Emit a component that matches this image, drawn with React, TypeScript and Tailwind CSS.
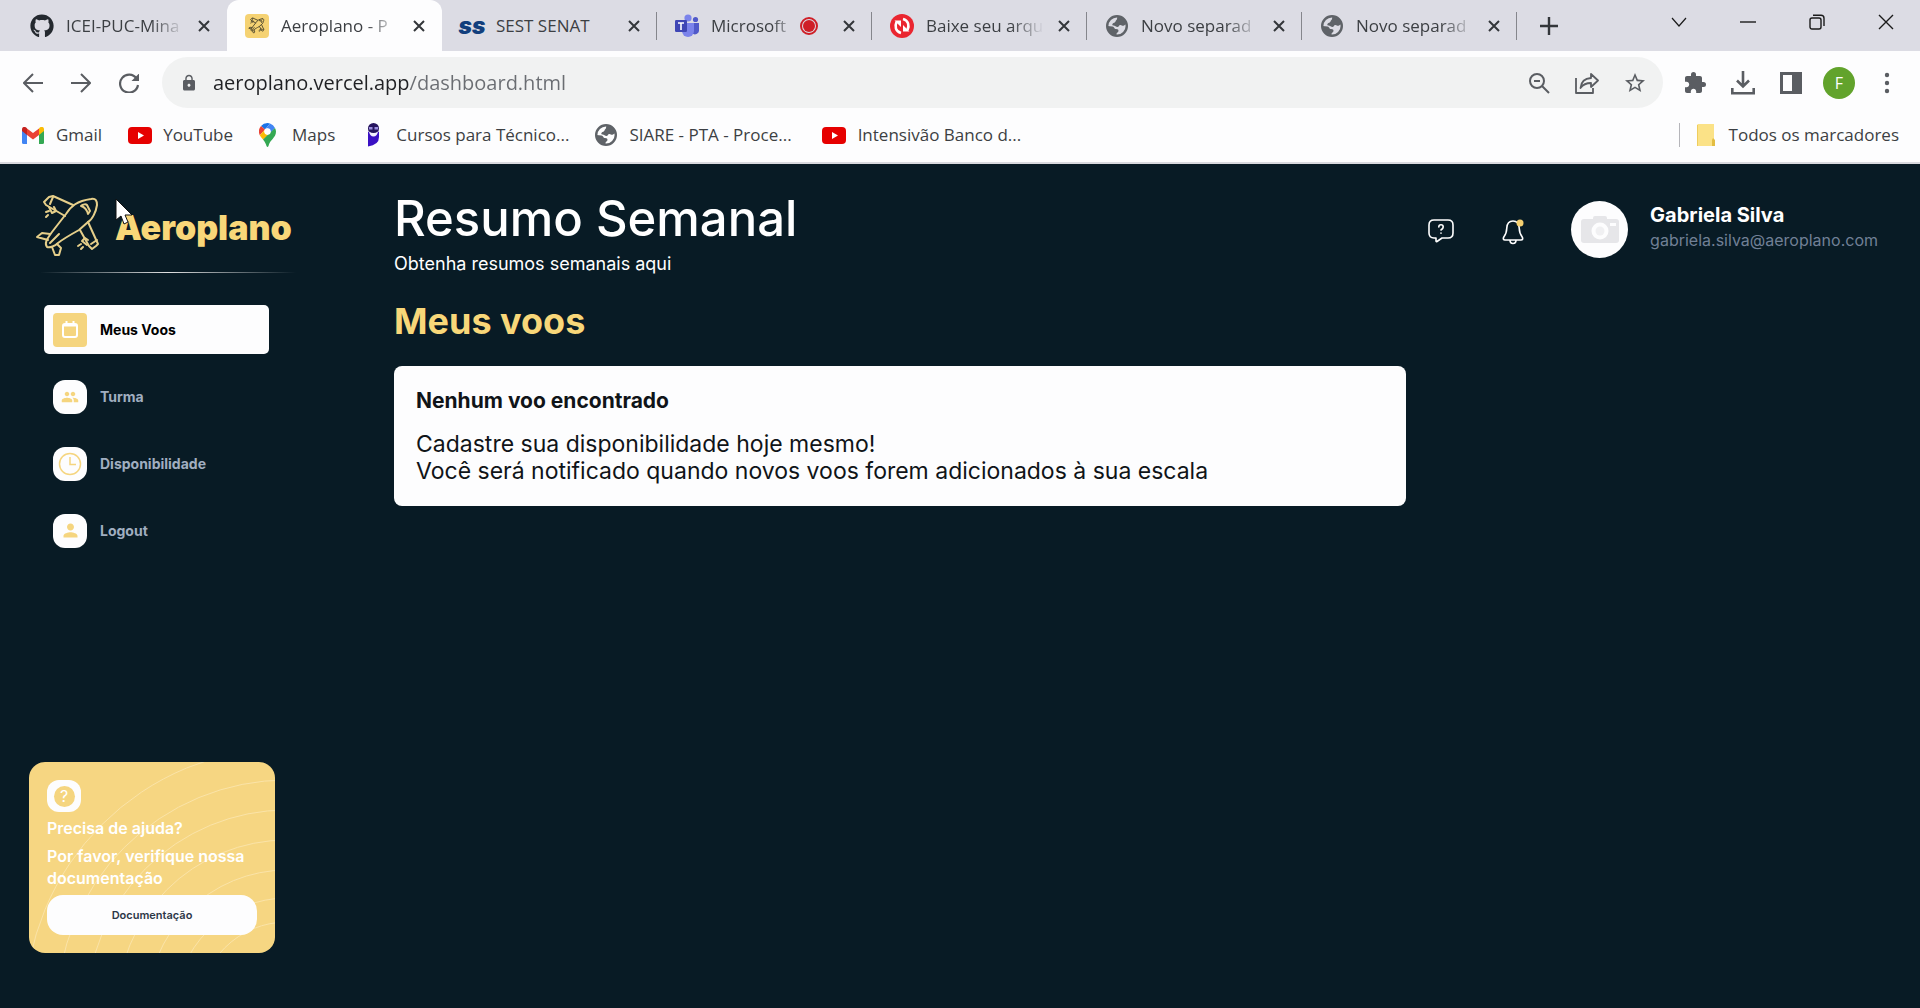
import type { ReactNode } from "react";
import { FaGithub } from "react-icons/fa";
import { MdExtension, MdGroup, MdLock, MdPerson, MdStarOutline } from "react-icons/md";

const GithubIcon = () => <FaGithub className="size-6 text-[#24292f]" />;

function GlobeIcon() {
  return (
    <svg viewBox="0 0 22 22" className="w-[22px] text-[#5f6368]" aria-hidden="true">
      <circle cx="11" cy="11" r="9.800" fill="none" stroke="currentColor" strokeWidth="2.400" />
      <path d="M11.500 1C16 1 20 4 21 8.500l-3 2c-1.500 1-2.500-1-4-.5-1.500.4-1 2-2.500 2S9 10.500 7.500 10.500 6 9.500 6.800 8.500 9 8 9.500 6.500 11 5 11 4z" fill="currentColor" />
      <path d="M1.500 11l5 .5c2 .3 1.500 2.500 3.500 2.500s2.500.8 2.500 2-2 1.500-2 3V21C5 20.500 1.500 16 1.500 11z" fill="currentColor" />
    </svg>
  );
}

function PlaneDrawing({ className, stroke, width }: { className: string; stroke: string; width: number }) {
  return (
    <svg viewBox="0 0 80 76" className={className} fill="none" stroke={stroke} strokeWidth={width} strokeLinejoin="round" strokeLinecap="round" aria-hidden="true">
      <path d="M61 9C66 8 67 11 67 15C66 22 62 30 58 32L49 40C40 45 33 49 28 53C25 56 20 58 17 57C14 53 17 49 22 42L36 24C41 16 47 11 61 9Z" />
      <path d="M43 15L23 6L19 7L14 12L16 15L35 26" />
      <path d="M23 7L20 14M19 17L22 23L26 21L24 17" />
      <path d="M58 32L68 54L66 56L62 59L59 56L50 40" />
      <path d="M61 54L67 50M57 55L52 51L55 48L58 50" />
      <path d="M20 44L12 43L7 47L18 50M27 54L31 58L29 65L25 65L22 57" />
      <path d="M29 44L20 53M51 16C53 14 56 14 57 15L60 21L58 24C57 20 55 17 51 16Z" />
      <path d="M19 21L16 22M18 25L16 27M51 54L48 56M53 57L51 59" />
    </svg>
  );
}

function AeroplanoIcon() {
  return (
    <span className="flex size-6 items-center justify-center rounded bg-[#f5d273]">
      <PlaneDrawing className="size-5" stroke="#5c5334" width={4} />
    </span>
  );
}

function SestIcon() {
  return <span className="font-['Inter',sans-serif] text-[23px] leading-6 font-black text-[#123f7d] italic">ss</span>;
}

function TeamsIcon() {
  return (
    <svg viewBox="0 0 24 24" className="size-6" aria-hidden="true">
      <circle cx="20.5" cy="5.5" r="2.6" fill="#5059c9" />
      <path d="M16 9h8v7a4 4 0 0 1-7 3z" fill="#5059c9" />
      <circle cx="13" cy="4" r="3.6" fill="#7b83eb" />
      <path d="M7 9h12v8a6 6 0 0 1-12 0z" fill="#7b83eb" />
      <rect x="0" y="6" width="12" height="12" rx="1.2" fill="#3f46b5" />
      <path d="M3 9h6M6 9v7" stroke="#fff" strokeWidth="1.6" />
    </svg>
  );
}

function ConvertIcon() {
  return (
    <svg viewBox="0 0 24 24" className="size-6" aria-hidden="true">
      <circle cx="12" cy="12" r="12" fill="#ea2630" />
      <g fill="none" stroke="#fff" strokeWidth="2.6">
        <path d="M11 19C5.500 17.500 4.500 12.500 6.500 8" />
        <path d="M13 5C18.500 6.500 19.500 11.500 17.500 16" />
      </g>
      <path d="M4.500 6.500l6.500 0v6.500zM19.500 17.500L13 17.500v-6.500z" fill="#fff" />
    </svg>
  );
}

function CloseGlyph() {
  return (
    <svg viewBox="0 0 12 12" className="size-3" stroke="#33363a" strokeWidth="2" aria-hidden="true">
      <path d="M1 1l10 10M11 1L1 11" />
    </svg>
  );
}

function Tab({ title, icon, active, recording, divider }: { title: string; icon: ReactNode; active?: boolean; recording?: boolean; divider?: boolean }) {
  return (
    <div
      className={
        active
          ? "relative flex h-[51px] w-[215px] items-center rounded-t-xl bg-[#fdfdfe] pr-[15px] pl-[18px]"
          : "relative flex h-[51px] w-[215px] items-center pr-[15px] pl-[18px]"
      }
    >
      <span className="flex w-6 shrink-0 justify-center">{icon}</span>
      <button
        className={
          title === "SEST SENAT"
            ? "ml-3 h-8 min-w-0 flex-1 text-left text-[17px] whitespace-nowrap"
            : "ml-3 h-8 min-w-0 flex-1 text-left text-[17px] whitespace-nowrap [mask-image:linear-gradient(to_right,black_72%,transparent)]"
        }
      >
        {title}
      </button>
      {recording && (
        <span className="mr-[11px] ml-1 flex size-[18px] shrink-0 items-center justify-center rounded-full border-2 border-[#cf1f27]">
          <span className="size-3 rounded-full bg-[#cf1f27]" />
        </span>
      )}
      <button aria-label={`Fechar ${title}`} className="ml-3 flex size-4 shrink-0 items-center justify-center">
        <CloseGlyph />
      </button>
      {divider && <span className="absolute top-3 right-0 h-7 w-px bg-[#85868c]" />}
    </div>
  );
}

function TabStrip() {
  return (
    <header className="flex h-[51px] bg-[#dcdce4] pl-3 text-[#3c3f43]">
      <nav aria-label="Separadores" className="flex min-w-0">
        <Tab title="ICEI-PUC-Mina" icon={<GithubIcon />} />
        <Tab title="Aeroplano - P" icon={<AeroplanoIcon />} active />
        <Tab title="SEST SENAT" icon={<SestIcon />} divider />
        <Tab title="Microsoft" icon={<TeamsIcon />} recording divider />
        <Tab title="Baixe seu arqu" icon={<ConvertIcon />} divider />
        <Tab title="Novo separad" icon={<GlobeIcon />} divider />
        <Tab title="Novo separad" icon={<GlobeIcon />} divider />
      </nav>
      <button aria-label="Novo separador" className="ml-[22px] flex w-5 shrink-0 items-center justify-center">
        <svg viewBox="0 0 18 18" className="size-[18px]" stroke="#33363a" strokeWidth="2.4" aria-hidden="true">
          <path d="M9 0v18M0 9h18" />
        </svg>
      </button>
      <div className="ml-auto flex h-11 items-center">
        <button aria-label="Pesquisar separadores" className="flex w-[69px] justify-center">
          <svg viewBox="0 0 16 10" className="w-4" fill="none" stroke="#1b1b1b" strokeWidth="1.2"><path d="M1 1l7 8 7-8" /></svg>
        </button>
        <button aria-label="Minimizar" className="flex w-[69px] justify-center">
          <svg viewBox="0 0 16 16" className="size-4" stroke="#1b1b1b" strokeWidth="1.4"><path d="M0 8h16" /></svg>
        </button>
        <button aria-label="Restaurar" className="flex w-[69px] justify-center">
          <svg viewBox="0 0 16 16" className="size-4" fill="none" stroke="#1b1b1b" strokeWidth="1.4">
            <rect x="1" y="4" width="11" height="11" rx="2" /><path d="M4 1.2h8a3 3 0 0 1 3 3V12" />
          </svg>
        </button>
        <button aria-label="Fechar janela" className="flex w-[69px] justify-center">
          <svg viewBox="0 0 16 16" className="size-4" stroke="#1b1b1b" strokeWidth="1.4"><path d="M1 1l14 14M15 1L1 15" /></svg>
        </button>
      </div>
    </header>
  );
}

function Toolbar() {
  return (
    <div className="flex h-[63px] items-center bg-[#fdfdfe] pr-[21px] pl-[23px] text-[#5a5d62]">
      <div className="flex w-[139px] shrink-0 gap-7">
        <button aria-label="Voltar">
          <svg viewBox="0 0 20 20" className="size-5" fill="none" stroke="currentColor" strokeWidth="2"><path d="M20 10H2M10 1L1 10l9 9" /></svg>
        </button>
        <button aria-label="Avançar">
          <svg viewBox="0 0 20 20" className="size-5" fill="none" stroke="currentColor" strokeWidth="2"><path d="M0 10h18M10 1l9 9-9 9" /></svg>
        </button>
        <button aria-label="Recarregar">
          <svg viewBox="0 0 20 20" className="size-5" fill="none" stroke="currentColor" strokeWidth="2.2">
            <path d="M17.5 5.5A9 9 0 1 0 19 12" /><path d="M20.5 0v8h-8z" fill="currentColor" stroke="none" />
          </svg>
        </button>
      </div>
      <div className="flex h-[51px] min-w-0 flex-1 items-center rounded-full bg-[#f1f2f2] pr-4 pl-[18px]">
        <MdLock className="size-[18px] shrink-0" />
        <input
          aria-label="Endereço"
          defaultValue="aeroplano.vercel.app/dashboard.html"
          className="ml-[15px] min-w-0 flex-1 bg-[linear-gradient(to_right,#202124_197px,#6a6d72_197px)] bg-clip-text text-[20px] text-transparent caret-black outline-none"
        />
        <div className="flex shrink-0 items-center gap-6">
          <button aria-label="Zoom">
            <svg viewBox="0 0 24 24" className="size-6" fill="none" stroke="currentColor" strokeWidth="2"><circle cx="10" cy="10" r="7" /><path d="M15 15l7 7M7 10h6" /></svg>
          </button>
          <button aria-label="Partilhar">
            <svg viewBox="0 0 24 24" className="size-6" fill="none" stroke="currentColor" strokeWidth="1.8" strokeLinejoin="round">
              <path d="M1 7v15h17v-5" /><path d="M16 3l7 6.500-7 6.500v-4c-5 0-8 1.500-10.500 5C6 11.500 9 7.500 16 7z" />
            </svg>
          </button>
          <button aria-label="Marcar"><MdStarOutline className="size-6" /></button>
        </div>
      </div>
      <div className="ml-5 flex shrink-0 items-center gap-6">
        <button aria-label="Extensões"><MdExtension className="size-6" /></button>
        <button aria-label="Transferências">
          <svg viewBox="0 0 24 24" className="size-6" fill="none" stroke="currentColor" strokeWidth="2.600"><path d="M12 0v15M6 9.500l6 6 6-6M1.300 17v5.200h21.400V17" /></svg>
        </button>
        <button aria-label="Painel lateral">
          <svg viewBox="0 0 24 24" className="size-6"><path fillRule="evenodd" fill="currentColor" d="M1 1h22v22H1zM4 4v16h9V4z" /></svg>
        </button>
        <button aria-label="Perfil" className="-mx-1 size-8 rounded-full bg-[#62a32c] text-[16px] font-medium text-white">F</button>
        <button aria-label="Menu">
          <svg viewBox="0 0 24 24" className="size-6" fill="currentColor"><circle cx="12" cy="4" r="2.200" /><circle cx="12" cy="12" r="2.200" /><circle cx="12" cy="20" r="2.200" /></svg>
        </button>
      </div>
    </div>
  );
}

const GmailIcon = () => (
  <svg viewBox="0 0 22 17" className="w-[22px]" aria-hidden="true">
    <path d="M0 2v13.500Q0 17 1.500 17H5V6z" fill="#4285f4" />
    <path d="M22 2v13.500q0 1.500-1.500 1.500H17V6z" fill="#34a853" />
    <path d="M17 1.500V8l5-4V2.200C22 0 19.500-.8 17.800.5z" fill="#fbbc04" />
    <path d="M5 8V1.500L11 6l6-4.500V8l-6 4.500z" fill="#ea4335" />
    <path d="M0 2.200V4l5 4V1.500L4.200.6C2.500-.8 0 0 0 2.200z" fill="#c5221f" />
  </svg>
);
const YoutubeIcon = () => (
  <svg viewBox="0 0 24 17" className="w-6" aria-hidden="true"><rect width="24" height="17" rx="4" fill="#e60000" /><path d="M10 5v7l6-3.500z" fill="#fff" /></svg>
);
const MapsIcon = () => (
  <svg viewBox="0 0 17 24" className="w-[17px]" aria-hidden="true">
    <path d="M8.500 0A8.500 8.500 0 0 0 2 3l4 3.500L11 .4A8 8 0 0 0 8.500 0z" fill="#1a73e8" />
    <path d="M2 3a8.500 8.500 0 0 0-1.200 9.200L6 6.500z" fill="#ea4335" />
    <path d="M11 .4L6 6.500a3.300 3.300 0 0 1 5 4.200L16 5A8.500 8.500 0 0 0 11 .4z" fill="#4285f4" />
    <path d="M.8 12.200A25 25 0 0 0 4 16.500l7-5.800a3.300 3.300 0 0 1-5-4.200z" fill="#fbbc04" />
    <path d="M16 5l-12 11.500C6 19 7 21 7.500 23q1 2 2 0c1-6 7.500-8 7.500-14.500A8 8 0 0 0 16 5z" fill="#34a853" />
    <circle cx="8.500" cy="8.500" r="3.200" fill="#fff" />
  </svg>
);
const CourseIcon = () => (
  <svg viewBox="0 0 13 24" className="w-[13px]" aria-hidden="true">
    <circle cx="6.500" cy="5.500" r="5.500" fill="#25145e" />
    <path d="M2 4h3.500v2.500H2zM7.500 4H11v2.500H7.500z" fill="#9a8ede" />
    <path d="M1 8.500q5.500 4 11 0V14q0 8-11 9.500z" fill="#3a10c4" />
    <path d="M2 8.500q4.500 3 9 0-1 5-4.500 5T2 8.500z" fill="#f4f0ff" />
  </svg>
);
const FolderIcon = () => (
  <svg viewBox="0 0 18 22" className="w-[18px]" aria-hidden="true"><path d="M0 1l1-1h16v22H0z" fill="#fbe287" /><path d="M15 22v-6l1-2 2 2v6z" fill="#e3bd42" /><path d="M0 1h1v21H0z" fill="#efcd5e" /></svg>
);

function Bookmark({ icon, label, gap }: { icon: ReactNode; label: string; gap?: string }) {
  return (
    <a href="#" className={`flex shrink-0 items-center whitespace-nowrap ${gap ?? "gap-3"}`}>
      {icon}
      {label}
    </a>
  );
}

function Bookmarks() {
  return (
    <nav aria-label="Marcadores" className="flex h-[50px] items-center gap-[26px] border-b-2 border-[#d9d9de] bg-[#fdfdfe] pr-[21px] pb-[6px] pl-[22px] text-[17px] text-[#3c3f43]">
      <Bookmark icon={<GmailIcon />} label="Gmail" />
      <Bookmark icon={<YoutubeIcon />} label="YouTube" gap="gap-[11px]" />
      <Bookmark icon={<MapsIcon />} label="Maps" gap="gap-4" />
      <Bookmark icon={<CourseIcon />} label="Cursos para Técnico..." gap="gap-4 pl-1.5" />
      <Bookmark icon={<GlobeIcon />} label="SIARE - PTA - Proce..." gap="gap-3" />
      <Bookmark icon={<YoutubeIcon />} label="Intensivão Banco d..." gap="gap-3 pl-1" />
      <div className="ml-auto flex h-6 items-center border-l border-[#b5b5ba] pl-[17px]">
        <Bookmark icon={<FolderIcon />} label="Todos os marcadores" gap="gap-[14px]" />
      </div>
    </nav>
  );
}

function MenuItem({ icon, label, active }: { icon: ReactNode; label: string; active?: boolean }) {
  return (
    <li>
      <a
        href="#"
        className={
          active
            ? "flex h-[49px] items-center gap-[13px] rounded-[5px] bg-[#fdfdfe] px-[9px] text-sm font-bold text-black"
            : "flex h-[49px] items-center gap-[13px] px-[9px] text-sm font-bold text-[#a0aec0]"
        }
      >
        <span
          className={
            active
              ? "flex size-[34px] items-center justify-center rounded bg-[#f5d57f] text-white"
              : "flex size-[34px] items-center justify-center rounded-xl bg-[#fdfdfe] text-[#f5d57f]"
          }
        >
          {icon}
        </span>
        {label}
      </a>
    </li>
  );
}

function HelpCard() {
  return (
    <section className="relative overflow-hidden rounded-2xl bg-[#f6d682] px-[18px] pt-[18px] pb-[18px] text-white">
      <svg viewBox="0 0 246 191" className="absolute inset-0 size-full" fill="none" stroke="#fae3a8" strokeWidth="1" aria-hidden="true">
        <circle cx="258" cy="248" r="262" />
        <circle cx="258" cy="248" r="230" />
        <circle cx="258" cy="248" r="200" />
        <circle cx="258" cy="248" r="170" />
        <circle cx="258" cy="248" r="140" />
        <circle cx="258" cy="248" r="112" />
        <circle cx="258" cy="248" r="88" />
      </svg>
      <div className="relative">
        <span className="flex h-8 w-[34px] items-center justify-center rounded-xl bg-[#fdfdfe]">
          <span className="flex size-[21px] items-center justify-center rounded-full bg-[#f5d57f] text-base">?</span>
        </span>
        <h2 className="mt-1 text-base leading-6 font-semibold">Precisa de ajuda?</h2>
        <p className="mt-[5px] text-base leading-[22px] font-semibold">Por favor, verifique nossa documentação</p>
        <button className="mt-[6px] h-10 w-full rounded-2xl bg-[#fdfdfe] text-[11px] font-semibold text-[#2d3748]">Documentação</button>
      </div>
    </section>
  );
}

function Sidebar() {
  return (
    <aside className="flex w-[394px] shrink-0 flex-col pb-[55px]">
      <div className="ml-[30px] flex w-[270px] items-start pt-[26px]">
        <PlaneDrawing className="w-20" stroke="#e6cf8a" width={2} />
        <span className="ml-[5px] pt-[18px] text-[34px] leading-10 font-black text-[#f8d779]">Aeroplano</span>
      </div>
      <hr className="mt-[6px] ml-10 h-px w-[256px] border-0 bg-[linear-gradient(to_right,transparent,#e0e1e2,transparent)]" />
      <nav aria-label="Menu principal" className="mt-8 ml-11 w-[225px]">
        <ul className="flex flex-col gap-[18px]">
          <MenuItem
            active
            label="Meus Voos"
            icon={
              <svg viewBox="0 0 18 18" className="size-[18px]" fill="none" stroke="currentColor" strokeWidth="2">
                <rect x="2" y="3" width="14" height="13" rx="2" /><path d="M2 4.500h14M5.500 0v4M12.500 0v4" />
              </svg>
            }
          />
          <MenuItem label="Turma" icon={<MdGroup className="size-[18px]" />} />
          <MenuItem
            label="Disponibilidade"
            icon={
              <svg viewBox="0 0 24 24" className="size-6" fill="none" stroke="currentColor" strokeWidth="1.500">
                <circle cx="12" cy="12" r="10.500" /><path d="M12 5v7.500h6" />
              </svg>
            }
          />
          <MenuItem label="Logout" icon={<MdPerson className="size-[21px]" />} />
        </ul>
      </nav>
      <div className="mt-auto ml-[29px] w-[246px]">
        <HelpCard />
      </div>
    </aside>
  );
}

function CameraIcon() {
  return (
    <svg viewBox="0 0 40 30" className="w-10" aria-hidden="true">
      <path d="M13 4V3q0-2 2-2h10q2 0 2 2v1h9q3 0 3 3v18q0 3-3 3H4q-3 0-3-3V7q0-3 3-3z" fill="#e6e6e9" />
      <circle cx="20" cy="16" r="8.500" fill="#fdfdfe" />
      <circle cx="20" cy="16" r="4.500" fill="#f0f0f2" />
      <path d="M30 8h6v3h-6z" fill="#fdfdfe" />
    </svg>
  );
}

function UserArea() {
  return (
    <div className="flex items-start pt-[37px]">
      <button aria-label="Ajuda" className="mt-[18px]">
        <svg viewBox="0 0 26 24" className="w-[26px] text-white" fill="none" stroke="currentColor" strokeWidth="1.600" strokeLinejoin="round" strokeLinecap="round">
          <path d="M6 1h14q5 0 5 5v8q0 5-5 5h-6l-5 3.500q-1 .5-1-.5v-3H6q-5 0-5-5V6q0-5 5-5z" />
          <path d="M10.800 8q0-2.200 2.200-2.200T15.200 8q0 1.500-2.200 3M13 14v.3" />
        </svg>
      </button>
      <button aria-label="Notificações" className="mt-[18px] ml-12">
        <svg viewBox="0 0 22 26" className="w-[22px] text-white" fill="none" stroke="currentColor" strokeWidth="1.600" strokeLinejoin="round">
          <path d="M11 2c-4 0-6 3-6.200 7-.2 5-1 6.500-3 9-1 1.800-.5 3 1.200 3h16c1.700 0 2.200-1.200 1.200-3-2-2.500-2.800-4-3-9C17 5 15 2 11 2z" />
          <path d="M8 21q0 3.500 3 3.500t3-3.500" />
          <circle cx="18" cy="4" r="3.500" fill="#f5d070" stroke="none" />
        </svg>
      </button>
      <div className="ml-[47px] flex size-[57px] items-center justify-center rounded-full bg-[#fdfdfe]">
        <CameraIcon />
      </div>
      <div className="ml-[22px] pt-px">
        <p className="text-[20px] leading-[26px] font-bold text-white">Gabriela Silva</p>
        <p className="text-base leading-6 text-[#718096]">gabriela.silva@aeroplano.com</p>
      </div>
    </div>
  );
}

export default function App() {
  return (
    <div className="flex min-h-screen flex-col font-['Open_Sans',sans-serif]">
      <TabStrip />
      <Toolbar />
      <Bookmarks />
      <div className="relative flex flex-1 bg-[#081b25] font-['Inter',sans-serif]">
        <Sidebar />
        <main className="min-w-0 flex-1 pr-[42px]">
          <div className="flex justify-between">
            <div className="pt-[25px] text-white">
              <h1 className="text-[49px] leading-[60px] font-medium">Resumo Semanal</h1>
              <p className="mt-[3px] text-[18px] leading-6">Obtenha resumos semanais aqui</p>
            </div>
            <UserArea />
          </div>
          <h2 className="mt-[21px] text-[36px] leading-[48px] font-bold text-[#f8d779]">Meus voos</h2>
          <section className="mt-[21px] max-w-[1012px] rounded-lg bg-[#fdfdfe] px-[22px] pt-[21px] pb-[21px] text-[#101418]">
            <h3 className="text-[21px] leading-7 font-bold">Nenhum voo encontrado</h3>
            <p className="mt-4 text-[23px] leading-[27px]">
              Cadastre sua disponibilidade hoje mesmo!
              <br />
              Você será notificado quando novos voos forem adicionados à sua escala
            </p>
          </section>
        </main>
        <svg viewBox="0 0 18 27" className="pointer-events-none absolute top-[34px] left-[115px] w-[18px]" aria-hidden="true">
          <path d="M1 1v21l5-4 3 8 4-2-3-7h7z" fill="#fff" stroke="#111" strokeWidth="1" />
        </svg>
      </div>
    </div>
  );
}
